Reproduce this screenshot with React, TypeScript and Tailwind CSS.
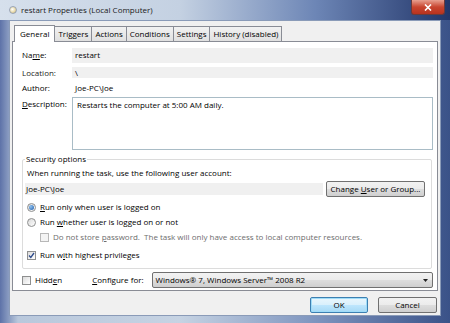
import React from 'react';

const font = { fontFamily: '"Open Sans", "Noto Sans", sans-serif' };

const Check = ({ checked = false, disabled = false }: { checked?: boolean; disabled?: boolean }) => (
  <span
    className={`w-[9px] h-[9px] border flex items-center justify-center shrink-0 ${disabled ? 'border-[#b8b8b8] bg-[#f4f4f4]' : 'border-[#8e8f8f] bg-[linear-gradient(135deg,#dcdcdc,#ffffff)]'}`}
  >
    {checked && (
      <svg width="7" height="7" viewBox="0 0 7 7">
        <path d="M1 3.5 L2.8 5.5 L6 1" fill="none" stroke="#2d4a8a" strokeWidth="1.3" />
      </svg>
    )}
  </span>
);

const Radio = ({ checked = false }: { checked?: boolean }) => (
  <span className="w-[9px] h-[9px] rounded-full border border-[#8e8f8f] bg-[linear-gradient(135deg,#d8d8d8,#ffffff)] flex items-center justify-center shrink-0">
    {checked && <span className="w-[5px] h-[5px] rounded-full bg-[radial-gradient(circle_at_35%_35%,#8fc2f0,#1d5aa8)]" />}
  </span>
);

const tabs = ['General', 'Triggers', 'Actions', 'Conditions', 'Settings', 'History (disabled)'];

const btn = 'rounded-[2px] border border-[#707070] bg-[linear-gradient(180deg,#f2f2f2_0%,#ebebeb_50%,#dddddd_51%,#cfcfcf_100%)]';

export default function App() {
  return (
    <div
      className="w-[450px] h-[323px] overflow-hidden flex flex-col bg-[linear-gradient(90deg,#5d72a8_0%,#b9c8dc_4%,#c6d3e3_40%,#7e95bf_70%,#3a5288_100%)] text-[8px] text-black"
      style={font}
    >
      {/* Title bar */}
      <div className="h-[20px] flex items-center pl-[9px] pr-[5px] shrink-0 bg-[linear-gradient(90deg,#d6e0ec_0%,#c4d1e2_40%,#6d86b6_70%,#22366a_100%)]">
        <span className="w-[8px] h-[8px] rounded-full bg-[radial-gradient(circle_at_40%_40%,#ffffff,#e7d7a0_60%,#8a8a8a)] border border-[#9aa4b4]" />
        <span className="ml-[4px] text-[8px] text-[#1a1a1a]">restart Properties (Local Computer)</span>
        <div className="ml-auto self-start w-[34px] h-[15px] rounded-b-[3px] border border-t-0 border-[#6b3a3a] bg-[linear-gradient(180deg,#e8a090,#c8452f_50%,#b8321f)] flex items-center justify-center">
          <svg width="8" height="7" viewBox="0 0 8 7">
            <path d="M1 0.5 L7 6.5 M7 0.5 L1 6.5" stroke="#ffffff" strokeWidth="1.6" />
          </svg>
        </div>
      </div>

      {/* Client area */}
      <div className="ml-[9px] mr-[9px] h-[296px] bg-[#f0f0f0] border border-[#8a9bb8] flex flex-col">
        {/* Tabs */}
        <div className="flex items-end pl-[4px] mt-[3px] h-[17px]">
          {tabs.map((t, i) => (
            <div
              key={t}
              className={
                i === 0
                  ? 'h-[17px] px-[5px] bg-white border border-b-0 border-[#898c95] flex items-center -mb-px z-10 relative'
                  : 'h-[15px] px-[3px] border border-b-0 border-l-0 border-[#898c95] bg-[linear-gradient(180deg,#f2f2f2,#e0e0e0)] flex items-center'
              }
            >
              {t}
            </div>
          ))}
        </div>

        {/* Panel */}
        <div className="mx-[2px] h-[250px] bg-white border border-[#898c95] flex flex-col pl-[9px] pr-[4px] pt-[5px]">
          <div className="flex items-center h-[16px]">
            <span className="w-[50px]">Na<u>m</u>e:</span>
            <div className="flex-1 h-[15px] bg-[#f0f0f0] flex items-center pl-[3px]">restart</div>
          </div>
          <div className="flex items-center h-[11px] mt-[4px]">
            <span className="w-[50px] text-[#222]">Location:</span>
            <div className="flex-1 h-[11px] bg-[#f0f0f0] flex items-center pl-[3px]">\</div>
          </div>
          <div className="flex items-center h-[12px] mt-[4px]">
            <span className="w-[50px]">Author:</span>
            <div className="flex-1 pl-[3px]">Joe-PC\Joe</div>
          </div>
          <div className="flex mt-[3px]">
            <span className="w-[50px] pt-[1px]"><u>D</u>escription:</span>
            <div className="flex-1 h-[53px] border border-[#a9bcc6] bg-white pl-[4px] pt-[1px]">
              Restarts the computer at 5:00 AM daily.
            </div>
          </div>

          {/* Security options */}
          <div className="relative mt-[9px] h-[110px] border border-[#dcdcdc] rounded-[2px] mr-[1px] pl-[4px] pr-[6px] pt-[7px] flex flex-col">
            <span className="absolute -top-[7px] left-[2px] bg-white px-[1px]">Security options</span>
            <div>When running the task, use the following user account:</div>
            <div className="flex items-center mt-[2px]">
              <div className="flex-1 h-[12px] bg-[#f0f0f0] flex items-center pl-[1px] -ml-[2px]">Joe-PC\Joe</div>
              <div className={`ml-[3px] w-[99px] h-[16px] flex items-center justify-center ${btn}`}>
                <span>Change <u>U</u>ser or Group...</span>
              </div>
            </div>
            <div className="flex items-center gap-[4px] mt-[4px]">
              <Radio checked />
              <span><u>R</u>un only when user is logged on</span>
            </div>
            <div className="flex items-center gap-[4px] mt-[3px]">
              <Radio />
              <span>Run <u>w</u>hether user is logged on or not</span>
            </div>
            <div className="flex items-center gap-[4px] mt-[3px] ml-[13px] text-[#6d6d6d]">
              <Check disabled />
              <span>Do not store <u>p</u>assword.&nbsp; The task will only have access to local computer resources.</span>
            </div>
            <div className="flex items-center gap-[4px] mt-[6px]">
              <Check checked />
              <span>Run w<u>i</u>th highest privileges</span>
            </div>
          </div>

          {/* Bottom row */}
          <div className="flex items-center mt-[3px]">
            <Check />
            <span className="ml-[4px]">Hidd<u>e</u>n</span>
            <span className="ml-[30px]"><u>C</u>onfigure for:</span>
            <div className={`ml-[8px] flex-1 h-[16px] flex items-center pl-[3px] pr-[4px] ${btn}`}>
              <span>Windows® 7, Windows Server™ 2008 R2</span>
              <svg className="ml-auto" width="5" height="3" viewBox="0 0 5 3">
                <path d="M0 0 L5 0 L2.5 3 Z" fill="#222" />
              </svg>
            </div>
          </div>
        </div>

        {/* Buttons */}
        <div className="flex justify-end gap-[10px] mt-[6px] pr-[3px]">
          <div className="w-[58px] h-[16px] rounded-[2px] border border-[#3c7fb1] bg-[linear-gradient(180deg,#eaf6fd_0%,#d9f0fc_50%,#bee6fd_51%,#a7d9f5_100%)] flex items-center justify-center shadow-[inset_0_0_0_1px_#9fdcf8]">
            OK
          </div>
          <div className={`w-[59px] h-[16px] flex items-center justify-center ${btn}`}>
            Cancel
          </div>
        </div>
      </div>
    </div>
  );
}
